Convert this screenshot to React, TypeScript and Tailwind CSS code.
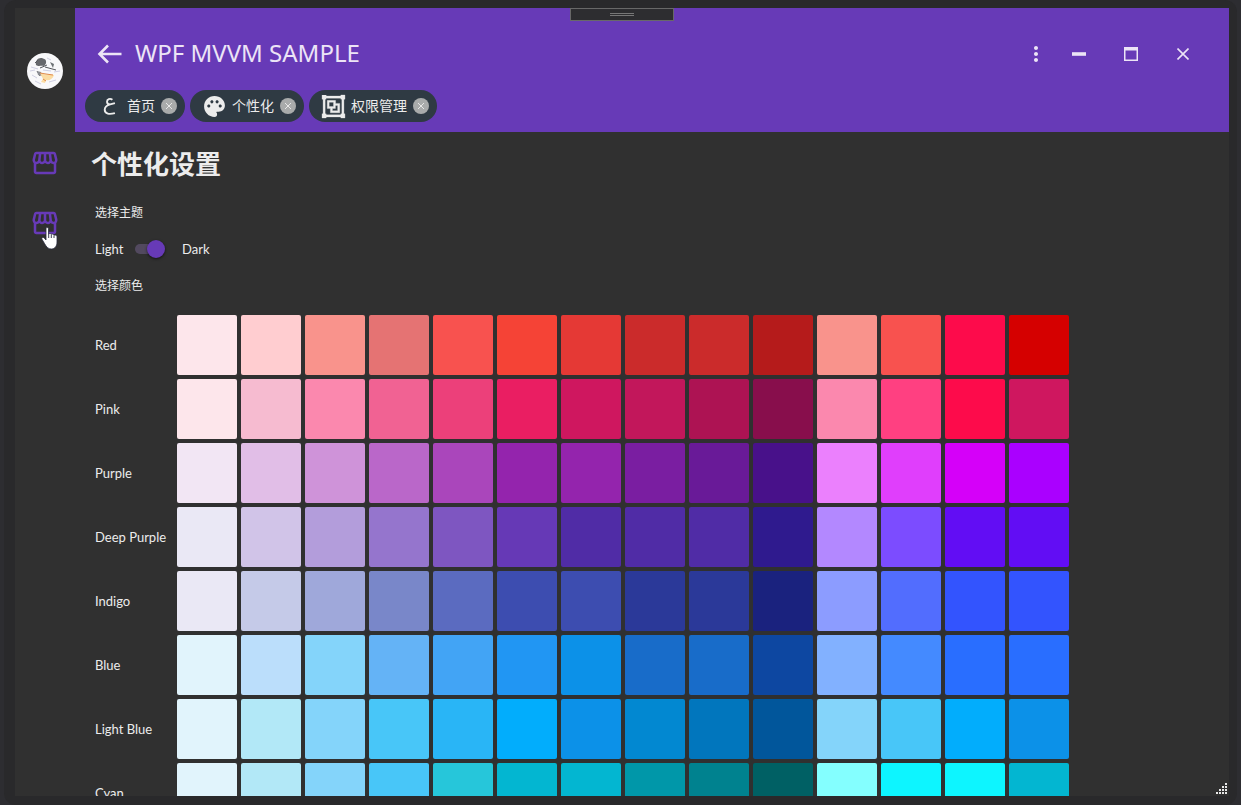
import { useState } from "react";
import { MdMoreVert, MdOutlineStorefront, MdPalette } from "react-icons/md";

const palette: { name: string; shades: string[] }[] = [
  { name: "Red", shades: ["#fde6eb", "#ffcdd0", "#f9938c", "#e57373", "#f8524f", "#f54336", "#e53935", "#cb2b2b", "#cb2b2b", "#b51b1b", "#f9938c", "#f8524f", "#fd0b4b", "#d50000"] },
  { name: "Pink", shades: ["#fde6eb", "#f6bbd0", "#fb88ae", "#f16293", "#ec407a", "#ea1e62", "#cf175f", "#c2175b", "#ad1353", "#880e4c", "#fb88ae", "#ff4081", "#fd0b4b", "#cf175f"] },
  { name: "Purple", shades: ["#f2e6f4", "#e1bee7", "#cf93d9", "#ba67c9", "#aa46bb", "#9424ad", "#9424ad", "#7a1ea1", "#691a98", "#48118a", "#eb80fd", "#e03efc", "#d500f9", "#aa00ff"] },
  { name: "Deep Purple", shades: ["#eae8f5", "#d1c4e8", "#b39ddb", "#9575cd", "#7e56c1", "#6639b6", "#502ca6", "#502ca6", "#502ca6", "#2f1a8e", "#b388ff", "#7c4cff", "#620df4", "#620df4"] },
  { name: "Indigo", shades: ["#eae8f5", "#c5cae8", "#9fa8da", "#7987c9", "#5b6bc0", "#3d4db0", "#3d4db0", "#2b3999", "#2b3999", "#1a227e", "#8c9cff", "#526dfe", "#3354fe", "#3354fe"] },
  { name: "Blue", shades: ["#e1f4fc", "#bbdefb", "#84d4fa", "#64b3f6", "#42a4f5", "#2196f3", "#0c91e8", "#186cc9", "#186cc9", "#0d47a1", "#82b1ff", "#448aff", "#296eff", "#296eff"] },
  { name: "Light Blue", shades: ["#e1f4fc", "#b2e8f7", "#84d4fa", "#48c6f8", "#29b5f6", "#02adfc", "#0c91e8", "#0288d1", "#0176bd", "#01569b", "#84d4fa", "#48c6f8", "#02adfc", "#0c91e8"] },
  { name: "Cyan", shades: ["#e1f4fc", "#b2e8f7", "#84d4fa", "#48c6f8", "#26c6da", "#03b6d1", "#03b6d1", "#0097a9", "#00828f", "#006064", "#84ffff", "#0df5ff", "#0df5ff", "#03b6d1"] },
];

function AinIcon() {
  return (
    <svg viewBox="0 0 24 24" className="size-[25px]" fill="none" stroke="currentColor" strokeWidth="1.8" strokeLinejoin="round" aria-hidden="true">
      <path d="M14.800 5.600C12.500 3.800 9.600 5 9.600 7.400C9.600 9.100 10.800 10 12.600 10L17.200 8.800M12.600 10C9.500 10.900 7.400 12.900 7.400 15.200C7.400 19.200 12 19.800 17.200 18.300" />
    </svg>
  );
}

function GroupIcon() {
  return (
    <svg viewBox="0 0 24 24" className="size-[25px]" fill="currentColor" stroke="currentColor" strokeWidth="0.300" aria-hidden="true">
      <path d="M1,1V5H2V19H1V23H5V22H19V23H23V19H22V5H23V1H19V2H5V1M5,4H19V5H20V19H19V20H5V19H4V5H5M6,6V14H9V18H18V9H14V6M8,8H12V12H8M14,11H16V16H11V14H14" />
    </svg>
  );
}

const tabs = [
  { label: "首页", icon: <AinIcon /> },
  { label: "个性化", icon: <MdPalette size={25} aria-hidden="true" /> },
  { label: "权限管理", icon: <GroupIcon /> },
];

function Avatar() {
  return (
    <svg viewBox="0 0 36 36" className="size-9" role="img" aria-label="Avatar">
      <circle cx="18" cy="18" r="18" fill="#f8f8fa" />
      <path d="M9 12C8 7 12 4 16 5.500C20 6 20 11 17 13C14 12 12 14 9 12Z" fill="#65676b" />
      <path d="M8 10L11 7M13 15L20 12M18 14L29 17M10 18L13 23" stroke="#55575c" strokeWidth="1" fill="none" />
      <path d="M23 9L27 11L26 15Z" fill="#6b7074" />
      <path d="M10 18L14 19L15 23L11 22Z" fill="#8b8d93" />
      <path d="M13 20C17 22 21 21 27 22C26 26 22 28 19 27L18 30L14 29L16 26Z" fill="#fbdca3" />
      <path d="M13 20L19 21L26 22M16 26L19 28" stroke="#e08a4a" strokeWidth="1" fill="none" />
      <path d="M4 14L11 16M5 22L10 25M20 5L24 7M27 19L33 18M8 28L14 31M22 29L29 27M3 18L8 17M16 17L24 18" stroke="#cfcfe2" strokeWidth="1" fill="none" />
    </svg>
  );
}

function Sidebar() {
  return (
    <nav className="flex w-15 shrink-0 flex-col items-center pt-[45px]" aria-label="Main">
      <Avatar />
      <div className="mt-11 flex flex-col">
        {["Store", "Market"].map((name) => (
          <button key={name} type="button" aria-label={name} className="flex size-15 items-center justify-center text-[#673ab7]">
            <MdOutlineStorefront size={30} />
          </button>
        ))}
      </div>
    </nav>
  );
}

function Header() {
  return (
    <header className="shrink-0 bg-[#673ab7] pt-[22px] pb-2.5">
      <div className="flex h-12 items-center pr-5 pl-[22px] text-[#ece4f6]">
        <button type="button" aria-label="Back" className="flex">
          <svg viewBox="0 0 26 24" className="h-6 w-[26px]" fill="none" stroke="currentColor" strokeWidth="2.6">
            <path d="M24.500 12H3M11 3.500L2.500 12L11 20.500" />
          </svg>
        </button>
        <h1 className="ml-3 pb-0.5 font-[Noto_Sans] text-[24px] leading-8">WPF MVVM SAMPLE</h1>
        <div className="ml-auto flex h-10">
          <button type="button" aria-label="More" className="flex w-[34px] items-center justify-center">
            <MdMoreVert size={24} />
          </button>
          <button type="button" aria-label="Minimize" className="flex w-13 items-center justify-center">
            <svg viewBox="0 0 14 14" className="size-3.5" aria-hidden="true">
              <path d="M0 5.200H14V8.800H0Z" fill="currentColor" />
            </svg>
          </button>
          <button type="button" aria-label="Maximize" className="flex w-13 items-center justify-center">
            <svg viewBox="0 0 14 14" className="size-3.5" aria-hidden="true">
              <path d="M0 0H14V14H0ZM1.500 3.500V12.500H12.500V3.500Z" fill="currentColor" fillRule="evenodd" />
            </svg>
          </button>
          <button type="button" aria-label="Close" className="flex w-13 items-center justify-center">
            <svg viewBox="0 0 12 12" className="size-3" fill="none" stroke="currentColor" strokeWidth="1.600" aria-hidden="true">
              <path d="M0.500 0.500L11.500 11.500M11.500 0.500L0.500 11.500" />
            </svg>
          </button>
        </div>
      </div>
      <div className="mt-3 flex gap-[5px] pl-2.5">
        {tabs.map((tab) => (
          <div key={tab.label} className="flex h-8 items-center rounded-full bg-[#2f3a43] pr-2 pl-3 text-[#ececec]">
            <button type="button" className="flex items-center gap-[5px] text-sm leading-5 whitespace-nowrap">
              {tab.icon}
              <span className="pb-0.5">{tab.label}</span>
            </button>
            <button type="button" aria-label={`Close ${tab.label}`} className="ml-1.5 flex size-4 items-center justify-center rounded-full bg-[#a9abab]">
              <svg viewBox="0 0 8 8" className="size-2" stroke="#e8e8e8" strokeWidth="1" aria-hidden="true">
                <path d="M1 1L7 7M7 1L1 7" />
              </svg>
            </button>
          </div>
        ))}
      </div>
    </header>
  );
}

function Settings() {
  const [dark, setDark] = useState(true);
  return (
    <main className="min-h-0 flex-1 overflow-hidden px-4 pt-[11px] text-[#ececec]">
      <h2 className="text-[26px] leading-10 font-bold">个性化设置</h2>
      <div className="pl-1 text-[12px] leading-5">
        <h3 className="mt-[19px]">选择主题</h3>
        <label className="mt-[17px] flex w-fit items-center font-[Lato] text-[13px]">
          <span className="w-10">Light</span>
          <input type="checkbox" role="switch" className="peer sr-only" checked={dark} onChange={(e) => setDark(e.target.checked)} />
          <span className="flex h-2.5 w-[30px] items-center rounded-full bg-linear-to-r from-[#52495f] from-80% to-transparent to-80% peer-checked:justify-end">
            <span className="size-[18px] shrink-0 rounded-full bg-[#673ab7] shadow-[0_1px_3px_rgba(0,0,0,0.6)]" />
          </span>
          <span className="ml-[17px]">Dark</span>
        </label>
        <h3 className="mt-4">选择颜色</h3>
        <div className="mt-5 flex flex-col gap-1 font-[Lato] text-[13px]">
          {palette.map((row) => (
            <div key={row.name} className="flex items-center gap-1">
              <span className="w-[78px] shrink-0 whitespace-nowrap">{row.name}</span>
              {row.shades.map((shade, i) => (
                <button
                  key={i}
                  type="button"
                  aria-label={`${row.name} ${i + 1}`}
                  className="size-15 shrink-0 rounded-[2px]"
                  style={{ backgroundColor: shade }}
                />
              ))}
            </div>
          ))}
        </div>
      </div>
    </main>
  );
}

function ResizeGrip() {
  return (
    <svg viewBox="0 0 11 11" className="absolute right-0.5 bottom-0.5 size-[11px]" fill="#e8e8e8" aria-hidden="true">
      <path d="M9 0h2v2H9zM6 3h2v2H6zM9 3h2v2H9zM3 6h2v2H3zM6 6h2v2H6zM9 6h2v2H9zM0 9h2v2H0zM3 9h2v2H3zM6 9h2v2H6zM9 9h2v2H9z" />
    </svg>
  );
}

function HandCursor() {
  return (
    <svg viewBox="0 0 17 23" className="absolute top-[219px] left-[26px] h-[23px] w-[17px]" aria-hidden="true">
      <path
        d="M5 1.500C5 .3 7.500 .3 7.500 1.500V7C8 6.200 10 6.400 10.200 7.400C11 6.800 12.700 7.100 12.900 8.200C14.500 7.500 16 8.200 16 9.800V15C16 19 14 22 10.500 22C7 22 5.500 20 3.500 16.500L.8 12C.4 10.600 2.200 9.800 3.300 11L5 13Z"
        fill="#fff"
        stroke="#26283c"
        strokeWidth="0.8"
      />
      <path d="M7.700 7V11M10.300 8V11M13 8.500V11" stroke="#26283c" strokeWidth="0.9" />
    </svg>
  );
}

export default function App() {
  return (
    <div className="h-screen bg-[#2d2d31] px-1 font-['Noto_Sans_CJK_SC',sans-serif]">
      <div className="h-full rounded-xl bg-[#29292b] pt-2 pr-2 pb-[9px] pl-[11px]">
        <div className="relative flex h-full overflow-hidden bg-[#303030]">
          <Sidebar />
          <div className="flex min-w-0 flex-1 flex-col">
            <Header />
            <Settings />
          </div>
          <div className="absolute top-0 left-1/2 flex h-[13px] w-[104px] -translate-x-1/2 items-center justify-center border border-[#686868] bg-[#2d2d30]">
            <span className="h-[3px] w-6 border-y border-[#777777]" />
          </div>
          <ResizeGrip />
          <HandCursor />
        </div>
      </div>
    </div>
  );
}
